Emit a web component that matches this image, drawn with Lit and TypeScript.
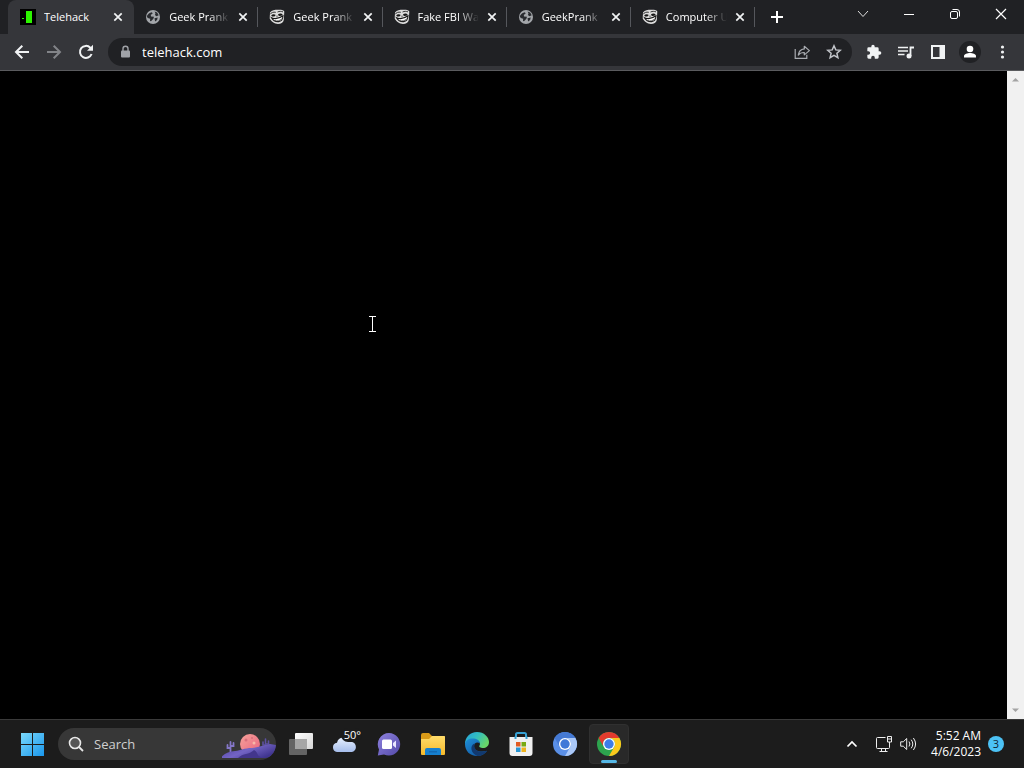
import { LitElement, html, css, svg } from "lit";
import { customElement } from "lit/decorators.js";
import { classMap } from "lit/directives/class-map.js";

type Fav = "door" | "globe" | "face";

const box = (size: number, view: string, body: unknown) =>
  html`<svg width=${size} height=${size} viewBox=${view} fill="none" aria-hidden="true">${body}</svg>`;

const favicons: Record<Fav, unknown> = {
  door: box(16, "0 0 16 16", svg`<rect width="16" height="16" fill="#000"/><path d="M6 2h6v12H6z" fill="#2df500"/><path d="M2 9h2v1H2z" fill="#2df500"/>`),
  globe: box(16, "0 0 16 16", svg`<circle cx="8" cy="8" r="7" fill="#a3a6aa"/><path d="M1.800 7.200C3 5 4.500 3.800 7 3.300l.6 1.500-1.800 1 .2 1.600 3 .4-.6 2-2.400 2.400-1-.2.2-2.200-2.500-.8z" fill="#292b2f"/><path d="m9.600 2.400 2.600 1.200 1.500 2.700-2.200.9-1.600-1.200.6-1.600zM9.500 9.200l3.200-.8-.6 2.600-2 1.400z" fill="#292b2f"/>`),
  face: box(16, "0 0 16 16", svg`<path d="M1 3.500C3 1 6.500.7 10 .8c3 0 5 .6 5.300 1.800l-.5 8.500c-.5 2.500-2.800 4-5.800 4-3.500-.3-7-2.500-8.300-5.500z" fill="#dcdcdc"/><path d="M.8 5.500c1.500-2 3.500-2.700 6-2.200M8.500 3c2-.9 3.700-.8 5.500-.1" stroke="#222" stroke-width=".9"/><path d="M2.200 6.300c1.400-1.300 3.200-1.400 4.600-.3l-1.400 1.400-2.400.2zM9 5.300c1.500-1 3.300-1 4.700-.1l-1.200 1.500-2.700.2z" fill="#161616"/><path d="M2.500 8.700c3 1.300 7.800.9 11.500-1.900-.2 3.500-2 5.700-4.500 5.800-3 .1-5.800-1.700-7-3.900z" fill="#fff" stroke="#181818" stroke-width="1.100"/><path d="M8 6.500v1.700M5.800 11.600c2.500.8 5 .2 6.700-1.600" stroke="#333" stroke-width=".8"/>`),
};

const cross = box(10, "0 0 10 10", svg`<path d="m1.300 1.300 7.400 7.400m0-7.400L1.300 8.700" stroke="#f1f3f4" stroke-width="1.700"/>`);

const icon = {
  plus: box(14, "0 0 14 14", svg`<path d="M7 1v12M1 7h12" stroke="#fff" stroke-width="2"/>`),
  caret: box(12, "0 0 12 12", svg`<path d="m1 3 5 5.500L11 3" stroke="#dedede"/>`),
  min: box(12, "0 0 12 12", svg`<path d="M1 6.500h10" stroke="#fff"/>`),
  restore: box(12, "0 0 12 12", svg`<rect x="1.500" y="3.500" width="7" height="7" rx="1.500" stroke="#fff"/><path d="M3.500 1.500H8a2.500 2.500 0 0 1 2.500 2.500v4.500" stroke="#fff"/>`),
  close: box(12, "0 0 12 12", svg`<path d="m1 1 10 10M11 1 1 11" stroke="#fff" stroke-width="1.200"/>`),
  back: box(16, "0 0 16 16", svg`<path d="M15 8H2m6.300-6.300L2 8l6.300 6.300" stroke="#f1f3f4" stroke-width="2"/>`),
  forward: box(16, "0 0 16 16", svg`<path d="M1 8h13M7.700 1.700 14 8l-6.300 6.300" stroke="#828488" stroke-width="2"/>`),
  reload: box(16, "0 0 16 16", svg`<path d="M13.600 10a6 6 0 1 1-1.300-6.300L14 5.500" stroke="#f1f3f4" stroke-width="2"/><path d="M15 .8v6H9z" fill="#f1f3f4"/>`),
  lock: box(14, "0 0 14 14", svg`<rect x="2" y="5.500" width="9" height="7" rx="1" fill="#a0a3a8"/><path d="M4 6V3.800a2.500 2.500 0 0 1 5 0V6" stroke="#a0a3a8" stroke-width="1.400"/>`),
  share: box(16, "0 0 16 16", svg`<path d="M1.200 5v9.300h11.600v-3.600" stroke="#a9acb1" stroke-width="1.200"/><path d="M10.300 2.300 15.400 6.600l-5.100 4.300V8.500c-2.500-.1-4.500.6-6 2.600.4-3.400 2.500-5.800 6-6.200z" stroke="#a9acb1" stroke-width="1.200" stroke-linejoin="round"/>`),
  star: box(16, "0 0 16 16", svg`<path d="m8 1.800 1.800 4.100 4.500.4-3.400 3 1 4.400L8 11.400l-3.900 2.300 1-4.400-3.400-3 4.500-.4z" stroke="#c1c4c9" stroke-width="1.500"/>`),
  puzzle: box(16, "0 0 24 24", svg`<path d="M20.500 11H19V7a2 2 0 0 0-2-2h-4V3.500a2.500 2.500 0 0 0-5 0V5H4a2 2 0 0 0-2 2v3.800h1.500a2.700 2.700 0 0 1 0 5.400H2V20a2 2 0 0 0 2 2h3.800v-1.500a2.700 2.700 0 0 1 5.400 0V22H17a2 2 0 0 0 2-2v-4h1.500a2.500 2.500 0 0 0 0-5z" fill="#f1f3f4"/>`),
  media: box(16, "0 0 16 16", svg`<path d="M0 3.500h10M0 7h10M0 10.500h6.500" stroke="#f1f3f4" stroke-width="1.600"/><path d="M12.500 12V3.500H16" stroke="#f1f3f4" stroke-width="1.800"/><circle cx="11" cy="12" r="2.500" fill="#f1f3f4"/>`),
  panel: box(16, "0 0 16 16", svg`<path d="M2 2h12v12H2z" stroke="#f1f3f4" stroke-width="2"/><path d="M9.500 2H14v12H9.500z" fill="#f1f3f4"/>`),
  person: box(22, "0 0 22 22", svg`<circle cx="11" cy="11" r="11" fill="#202124"/><circle cx="11" cy="8" r="3.300" fill="#fff"/><path d="M5 16.500v-1.300c0-2.400 3.500-3.200 6-3.200s6 .8 6 3.200v1.300z" fill="#fff"/>`),
  dots: box(16, "0 0 16 16", svg`<circle cx="8.500" cy="3" r="1.600" fill="#f1f3f4"/><circle cx="8.500" cy="8" r="1.600" fill="#f1f3f4"/><circle cx="8.500" cy="13" r="1.600" fill="#f1f3f4"/>`),
  up: box(7, "0 0 7 7", svg`<path d="M0 5.500 3.500 2 7 5.500z" fill="#a3a3a3"/>`),
  down: box(7, "0 0 7 7", svg`<path d="M0 1.500 3.500 5 7 1.500z" fill="#a3a3a3"/>`),
  beam: html`<svg width="9" height="17" viewBox="0 0 9 17" aria-hidden="true"><path d="M1 .5h7M1 15.500h7M4.500 1v14" stroke="#fff"/></svg>`,
  lens: box(16, "0 0 16 16", svg`<circle cx="7" cy="7" r="5.500" fill="#555" stroke="#e8e8e8" stroke-width="1.600"/><path d="m11 11 4 4" stroke="#e8e8e8" stroke-width="1.800"/>`),
  windows: box(24, "0 0 24 24", svg`<defs><linearGradient id="w" x2="1" y2="1"><stop stop-color="#7ad9fb"/><stop offset="1" stop-color="#1996ec"/></linearGradient></defs><path d="M1 1h11v11H1zM13 1h11v11H13zM1 13h11v11H1zM13 13h11v11H13z" fill="url(#w)"/>`),
  tray: box(12, "0 0 12 12", svg`<path d="m1.500 8.500 4.500-4.500 4.500 4.500" stroke="#fff" stroke-width="1.700"/>`),
  net: box(16, "0 0 16 16", svg`<path d="M9.500 1.500h-8a1 1 0 0 0-1 1v9a1 1 0 0 0 1 1h11a1 1 0 0 0 1-1V8M5.500 12.500v3M9.500 12.500v3M3.500 15.500h8M11.500.5h4v5.500h-4zM11.500 3h4M13.500 6v3" stroke="#eee"/>`),
  sound: box(16, "0 0 16 16", svg`<path d="M.7 5.800h2.600L6.700 2.500v11L3.300 10.200H.7zM9 5.500q1.800 2.500 0 5M11.200 3.700q3.200 4.300 0 8.600M13.400 2q4.400 6 0 12" stroke="#eee" stroke-linejoin="round"/>`),
};

const desert = html`<svg width="54" height="32" viewBox="0 0 54 32" aria-hidden="true">
  <defs>
    <linearGradient id="moon" x2="1" y2="1"><stop stop-color="#f6a39a"/><stop offset="1" stop-color="#e9637f"/></linearGradient>
    <linearGradient id="dune" x2="1" y2=".6"><stop stop-color="#4a3c9a"/><stop offset=".55" stop-color="#7364c4"/><stop offset="1" stop-color="#40358f"/></linearGradient>
  </defs>
  <circle cx="28" cy="16" r="10" fill="url(#moon)"/>
  <circle cx="24" cy="12" r="1.500" fill="#d96f7c"/><circle cx="30" cy="10" r="1" fill="#d96f7c"/><circle cx="32" cy="15" r="1.500" fill="#f7b7a8"/>
  <path d="M8.500 25V14M8.500 20H5.500v-3M8.500 18h3v-3" stroke="#8577c8" stroke-width="1.800" stroke-linecap="round" fill="none"/>
  <path d="M43.500 21V11M43.500 17h-2.500v-3M43.500 16h3v-3" stroke="#5d51a3" stroke-width="1.600" stroke-linecap="round" fill="none"/>
  <path d="M-2 30c4-4 9-7 15-7 6-.5 9-3 17-3 8-1 13-3 18-4l6 1v5c-3 5-6 8-11 8z" fill="url(#dune)"/>
  <path d="M16 30c5-5 11-3 16-8 5 3 2 6 9 8z" fill="#43368c"/>
</svg>`;

const apps: { name: string; art: unknown; on?: boolean; temp?: string }[] = [
  { name: "Task view", art: box(26, "0 0 26 26", svg`<defs><linearGradient id="tv" x2="1" y2="1"><stop stop-color="#fff"/><stop offset="1" stop-color="#d6d6d6"/></linearGradient></defs><rect x="7" y="2" width="18" height="16" rx="1" fill="url(#tv)"/><rect x="1" y="8" width="18" height="16" rx="1" fill="#646464"/><path d="M7 8h12v10H7z" fill="#a6a6a6"/>`) },
  { name: "Weather", temp: "50°", art: box(26, "0 0 26 26", svg`<defs><linearGradient id="cl" y2="1" x2="0"><stop stop-color="#e7f0fe"/><stop offset="1" stop-color="#a6bdeb"/></linearGradient></defs><path d="M5 21a4.700 4.700 0 0 1 0-9.300 6.500 6.500 0 0 1 12.500-.7A5 5 0 1 1 20 21z" fill="url(#cl)"/>`) },
  { name: "Chat", art: box(24, "0 0 24 24", svg`<defs><linearGradient id="ch" x2="1" y2="1"><stop stop-color="#8e82df"/><stop offset="1" stop-color="#5349a8"/></linearGradient></defs><path d="M12 1a11.300 11.300 0 1 1-5 21.500L.8 23.500 2 17.500A11.300 11.300 0 0 1 12 1z" fill="url(#ch)"/><rect x="5" y="7.500" width="10" height="9.500" rx="1.500" fill="#fff"/><path d="m16 11 3-2.500v7.500l-3-2.500z" fill="#e8e5ff"/>`) },
  { name: "File Explorer", art: box(26, "0 0 26 26", svg`<defs><linearGradient id="fo" x2="0" y2="1"><stop stop-color="#ffdc6b"/><stop offset="1" stop-color="#f5b92a"/></linearGradient></defs><path d="M1 4a2 2 0 0 1 2-2h6l3 3h12a1 1 0 0 1 1 1v3H1z" fill="#d99a18"/><path d="M1 8h8l3-3h12a1 1 0 0 1 1 1v17a1 1 0 0 1-1 1H2a1 1 0 0 1-1-1z" fill="url(#fo)"/><path d="M5 24v-5a2 2 0 0 1 2-2h12a2 2 0 0 1 2 2v5z" fill="#1680cf"/><path d="M9 20h8v1.500H9z" fill="#1269b3"/>`) },
  { name: "Edge", art: box(26, "0 0 26 26", svg`<defs><linearGradient id="e1" x2="1" y2=".5"><stop stop-color="#259fdd"/><stop offset=".5" stop-color="#32bec0"/><stop offset="1" stop-color="#68d568"/></linearGradient><linearGradient id="e2" x2="1" y2="1"><stop stop-color="#1e8fd8"/><stop offset="1" stop-color="#104d98"/></linearGradient></defs><path d="M1 13C1 6 6 1 13 1s12 5 12 10c0 4-3 6-6 6-2.500 0-4.500-1-3.500-2.500 1.500-2-.5-5.500-4-5.500C7 9 3 11 1 13z" fill="url(#e1)"/><path d="M1 13C1.500 9 5.500 7 10 7.500c4 .5 6 3 6 5-3-2-6-.5-6 3 0 4 5 6 13 4.500-2 3-6 5-10 5C6 25 1 20 1 13z" fill="url(#e2)"/><path d="M10.500 12.500c-5 2-4 10 3 12.500 4 0 7.500-2 9.700-5.500-7 3-14 .5-12.700-7z" fill="#12396f"/>`) },
  { name: "Microsoft Store", art: box(26, "0 0 26 26", svg`<path d="M8 7V3.500A1.500 1.500 0 0 1 9.500 2h7A1.500 1.500 0 0 1 18 3.500V7" stroke="#36a1d4" stroke-width="2"/><path d="M1.500 6h23v16a3 3 0 0 1-3 3h-17a3 3 0 0 1-3-3z" fill="#f0f0f0"/><path d="M7.500 5.500V8M18.500 5.500V8" stroke="#36a1d4" stroke-width="2"/><path d="M8 11h4.500v4.500H8z" fill="#e25b20"/><path d="M13.500 11H18v4.500h-4.500z" fill="#78a912"/><path d="M8 16.500h4.500V21H8z" fill="#2795d3"/><path d="M13.500 16.500H18V21h-4.500z" fill="#efb31d"/>`) },
  { name: "Chromium", art: box(26, "0 0 26 26", svg`<circle cx="13" cy="13" r="12" fill="#5a8fe6"/><path d="M2.600 7A12 12 0 0 1 23.400 7H13a6 6 0 0 0-5.200 9z" fill="#4479d4"/><path d="M23.400 7A12 12 0 0 1 13 25l5.200-9A6 6 0 0 0 13 7z" fill="#aac8f7"/><circle cx="13" cy="13" r="6" fill="#fff"/><circle cx="13" cy="13" r="4.700" fill="#3f78d8"/>`) },
  { name: "Google Chrome", on: true, art: box(26, "0 0 26 26", svg`<circle cx="13" cy="13" r="12" fill="#2da44e"/><path d="M2.600 7A12 12 0 0 1 23.400 7H13a6 6 0 0 0-5.200 9z" fill="#e33b2e"/><path d="M23.400 7A12 12 0 0 1 13 25l5.200-9A6 6 0 0 0 13 7z" fill="#fbc91c"/><circle cx="13" cy="13" r="6" fill="#fff"/><circle cx="13" cy="13" r="4.700" fill="#3c7de8"/>`) },
];

const reset = css`
  :host { display: block; font: 12px/16px "Open Sans", "Noto Sans", sans-serif; color: #fff; }
  * { box-sizing: border-box; }
  svg { display: block; flex: none; }
  button { display: flex; align-items: center; justify-content: center; flex: none; margin: 0; padding: 0; border: 0; background: none; color: inherit; font: inherit; }
  input { flex: 1; min-width: 0; padding: 0; border: 0; outline: 0; background: none; color: inherit; font: inherit; }
`;

@customElement("tab-strip")
export class TabStrip extends LitElement {
  static styles = [reset, css`
    :host { background: #202124; }
    .strip { display: flex; height: 34px; padding-left: 8px; }
    .tabs { display: flex; flex: 0 1 747px; min-width: 0; }
    .tab { display: flex; align-items: center; flex: 1 1 124px; min-width: 0; height: 34px; padding: 0 10px 0 11px; gap: 8px; }
    .tab.on { flex-basis: 126px; padding: 0 11px 0 12px; background: #35363a; border-radius: 8px 8px 0 0; }
    .tab.line { background: linear-gradient(#55575c, #55575c) right center / 1px 20px no-repeat; }
    .title { flex: 1; min-width: 0; overflow: hidden; white-space: nowrap; font-size: 11px; }
    .tab:not(.on) .title { mask-image: linear-gradient(90deg, #000 65%, transparent); }
    .title button { display: block; }
    .shut { width: 10px; height: 16px; }
    .new { width: 44px; height: 34px; }
    .controls { display: flex; margin-left: auto; }
    .controls button { width: 46px; height: 28px; }
  `];

  private tabs: { title: string; fav: Fav }[] = [
    { title: "Telehack", fav: "door" },
    { title: "Geek Prank", fav: "globe" },
    { title: "Geek Prank", fav: "face" },
    { title: "Fake FBI Wa", fav: "face" },
    { title: "GeekPrank", fav: "globe" },
    { title: "Computer U", fav: "face" },
  ];

  render() {
    return html`<header class="strip">
      <div class="tabs">${this.tabs.map((t, i) => html`
        <div class=${classMap({ tab: true, on: i === 0, line: i > 0 })}>
          ${favicons[t.fav]}
          <div class="title"><button>${t.title}</button></div>
          <button class="shut" aria-label="Close tab">${cross}</button>
        </div>`)}</div>
      <button class="new" aria-label="New tab">${icon.plus}</button>
      <div class="controls">
        <button aria-label="Search tabs">${icon.caret}</button>
        <button aria-label="Minimize">${icon.min}</button>
        <button aria-label="Restore">${icon.restore}</button>
        <button aria-label="Close">${icon.close}</button>
      </div>
    </header>`;
  }
}

@customElement("browser-toolbar")
export class BrowserToolbar extends LitElement {
  static styles = [reset, css`
    .bar { display: flex; align-items: center; height: 37px; padding: 0 6px; background: #35363a; border-bottom: 1px solid #5a5b5e; }
    .bar button { width: 32px; height: 28px; }
    .address { display: flex; align-items: center; flex: 1; min-width: 0; height: 28px; margin: 0 6px; padding: 0 2px 0 11px; border-radius: 14px; background: #202124; }
    .address input { margin-left: 9px; font-size: 13px; }
  `];

  render() {
    return html`<nav class="bar">
      <button aria-label="Back">${icon.back}</button>
      <button aria-label="Forward">${icon.forward}</button>
      <button aria-label="Reload">${icon.reload}</button>
      <div class="address">
        ${icon.lock}
        <input aria-label="Address" .value=${"telehack.com"} />
        <button aria-label="Share">${icon.share}</button>
        <button aria-label="Bookmark">${icon.star}</button>
      </div>
      <button aria-label="Extensions">${icon.puzzle}</button>
      <button aria-label="Media">${icon.media}</button>
      <button aria-label="Side panel">${icon.panel}</button>
      <button aria-label="Profile">${icon.person}</button>
      <button aria-label="Menu">${icon.dots}</button>
    </nav>`;
  }
}

@customElement("task-bar")
export class TaskBar extends LitElement {
  static styles = [reset, css`
    .bar { display: flex; align-items: center; height: 49px; padding: 0 20px 0 12px; border-top: 1px solid #3a3a3a; background: #1c1c1c; }
    .start { width: 40px; height: 40px; }
    .search { display: flex; align-items: center; flex: none; gap: 10px; width: 218px; height: 32px; margin: 0 3px 0 6px; padding-left: 10px; border-radius: 16px; background: #373737; overflow: hidden; }
    .search input { font-size: 13px; }
    .search input::placeholder { color: #d0d0d0; opacity: 1; }
    .apps { display: flex; gap: 4px; padding-left: 2px; }
    .app { position: relative; width: 40px; height: 40px; border-radius: 4px; }
    .app.on { background: #292929; border: 1px solid #303030; }
    .app.on::after { content: ""; position: absolute; bottom: 0; left: 11px; width: 16px; height: 3px; border-radius: 2px; background: #55b7e5; }
    .temp { position: absolute; top: 4px; right: 3px; padding: 0 1px 0 3px; border-radius: 8px; background: #1c1c1c; font-size: 11px; line-height: 14px; }
    .tray { display: flex; align-items: center; margin-left: auto; }
    .tray button { width: 24px; height: 40px; }
    .tray .more { width: 40px; }
    .tray .clock { flex-direction: column; align-items: flex-end; width: auto; margin: 0 7px 0 11px; line-height: 16px; }
    .tray .count { width: 16px; height: 16px; border-radius: 50%; background: #4cc2f5; color: #123; font-size: 11px; }
  `];

  render() {
    return html`<footer class="bar">
      <button class="start" aria-label="Start">${icon.windows}</button>
      <label class="search">${icon.lens}<input aria-label="Search" placeholder="Search" />${desert}</label>
      <div class="apps">${apps.map((a) => html`
        <button class=${classMap({ app: true, on: !!a.on })} aria-label=${a.name}>${a.art}${a.temp ? html`<span class="temp">${a.temp}</span>` : ""}</button>`)}</div>
      <div class="tray">
        <button class="more" aria-label="Hidden icons">${icon.tray}</button>
        <button aria-label="Network">${icon.net}</button>
        <button aria-label="Volume">${icon.sound}</button>
        <button class="clock"><span>5:52 AM</span><span>4/6/2023</span></button>
        <button class="count">3</button>
      </div>
    </footer>`;
  }
}

@customElement("app-root")
export class AppRoot extends LitElement {
  static styles = [reset, css`
    :host { display: flex; flex-direction: column; height: 100vh; background: #000; overflow: hidden; }
    .page { position: relative; display: flex; flex: 1; min-height: 0; }
    .screen { flex: 1; background: #000; }
    .beam { position: absolute; left: 368px; top: 245px; }
    .scroll { display: flex; flex-direction: column; justify-content: space-between; width: 17px; background: #f1f1f1; }
    .scroll button { width: 17px; height: 17px; }
  `];

  render() {
    return html`
      <tab-strip></tab-strip>
      <browser-toolbar></browser-toolbar>
      <div class="page">
        <main class="screen"></main>
        <div class="beam">${icon.beam}</div>
        <div class="scroll">
          <button aria-label="Scroll up">${icon.up}</button>
          <button aria-label="Scroll down">${icon.down}</button>
        </div>
      </div>
      <task-bar></task-bar>`;
  }
}
